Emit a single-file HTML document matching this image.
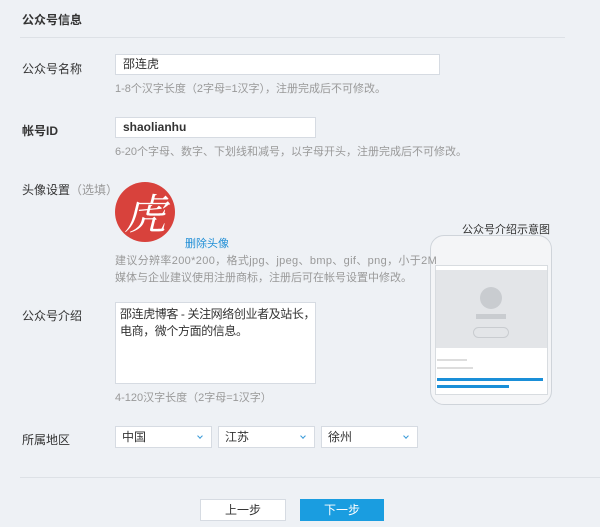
<!DOCTYPE html>
<html><head><meta charset="utf-8"><style>
*{margin:0;padding:0;box-sizing:border-box}
body{width:600px;height:527px;background:#eef1f5;font-family:"Liberation Sans","Noto Sans CJK SC",sans-serif;font-size:12px;color:#333;position:relative;overflow:hidden}
.a{position:absolute;white-space:nowrap}
.lbl{font-size:12px;color:#333}
.hint{font-size:11px;color:#999}
.inp{position:absolute;background:#fff;border:1px solid #d6dbe2;padding:0 7px;line-height:19px;font-size:12px;color:#333}
.sel{position:absolute;background:#fff;border:1px solid #d6dbe2;height:22px;top:426px;padding:0 6px;line-height:20px}
.sel:after{content:"";position:absolute;right:9px;top:7px;width:3px;height:3px;border-right:1.5px solid #3a9ad9;border-bottom:1.5px solid #3a9ad9;transform:rotate(45deg)}
</style></head><body>
<div class="a" style="left:22px;top:11px;font-weight:bold;font-size:12px">公众号信息</div>
<div class="a" style="left:20px;top:37px;width:545px;height:1px;background:#dde1e6"></div>

<div class="a lbl" style="left:22px;top:60px">公众号名称</div>
<div class="inp" style="left:115px;top:54px;width:325px;height:21px">邵连虎</div>
<div class="a hint" style="left:115px;top:80px">1-8个汉字长度（2字母=1汉字），注册完成后不可修改。</div>

<div class="a lbl" style="left:22px;top:122px;font-weight:bold">帐号ID</div>
<div class="inp" style="left:115px;top:117px;width:201px;height:21px;font-weight:bold">shaolianhu</div>
<div class="a hint" style="left:115px;top:143px">6-20个字母、数字、下划线和减号，以字母开头，注册完成后不可修改。</div>

<div class="a lbl" style="left:22px;top:181px">头像设置<span style="color:#999">（选填）</span></div>
<div class="a" style="left:115px;top:182px;width:60px;height:60px;border-radius:50%;background:#d8423c;color:#fff;font-size:42px;line-height:60px;text-align:center;font-family:'Noto Serif CJK SC',serif;font-style:italic">虎</div>
<div class="a" style="left:185px;top:235px;color:#1f8ed6;font-size:11px">删除头像</div>

<div class="a" style="left:462px;top:221px;font-size:11px;color:#333">公众号介绍示意图</div>
<div class="a" style="left:430px;top:235px;width:122px;height:170px;border:1px solid #cfd4da;border-radius:14px;background:#f4f5f7"></div>
<div class="a" style="left:435px;top:265px;width:113px;height:130px;background:#fff;border:1px solid #d8dce0"></div>
<div class="a" style="left:436px;top:270px;width:111px;height:78px;background:#e3e5e8"></div>
<div class="a" style="left:480px;top:287px;width:22px;height:22px;border-radius:50%;background:#c9ccd0"></div>
<div class="a" style="left:476px;top:314px;width:30px;height:5px;background:#c9ccd0"></div>
<div class="a" style="left:473px;top:327px;width:36px;height:11px;border:1px solid #c9ccd0;border-radius:6px"></div>
<div class="a" style="left:437px;top:359px;width:30px;height:2px;background:#ddd"></div>
<div class="a" style="left:437px;top:367px;width:36px;height:2px;background:#ddd"></div>
<div class="a" style="left:437px;top:378px;width:106px;height:3px;background:#1a8fd8"></div>
<div class="a" style="left:437px;top:385px;width:72px;height:3px;background:#1a8fd8"></div>

<div class="a hint" style="left:115px;top:252px;letter-spacing:0.35px">建议分辨率200*200，格式jpg、jpeg、bmp、gif、png，小于2M</div>
<div class="a hint" style="left:115px;top:269px">媒体与企业建议使用注册商标，注册后可在帐号设置中修改。</div>

<div class="a lbl" style="left:22px;top:307px">公众号介绍</div>
<div class="inp" style="left:115px;top:302px;width:201px;height:82px;padding:3px 4px;line-height:17px;white-space:nowrap;overflow:hidden;letter-spacing:-0.4px">邵连虎博客 - 关注网络创业者及站长，<br>电商，微个方面的信息。</div>
<div class="a hint" style="left:115px;top:389px">4-120汉字长度（2字母=1汉字）</div>

<div class="a lbl" style="left:22px;top:431px">所属地区</div>
<div class="sel" style="left:115px;width:97px">中国</div>
<div class="sel" style="left:218px;width:97px">江苏</div>
<div class="sel" style="left:321px;width:97px">徐州</div>

<div class="a" style="left:20px;top:477px;width:580px;height:1px;background:#dde1e6"></div>
<div class="a" style="left:200px;top:499px;width:86px;height:22px;background:#fff;border:1px solid #d6dbe2;text-align:center;line-height:20px">上一步</div>
<div class="a" style="left:300px;top:499px;width:84px;height:22px;background:#1a9de0;color:#fff;text-align:center;line-height:22px">下一步</div>
</body></html>
